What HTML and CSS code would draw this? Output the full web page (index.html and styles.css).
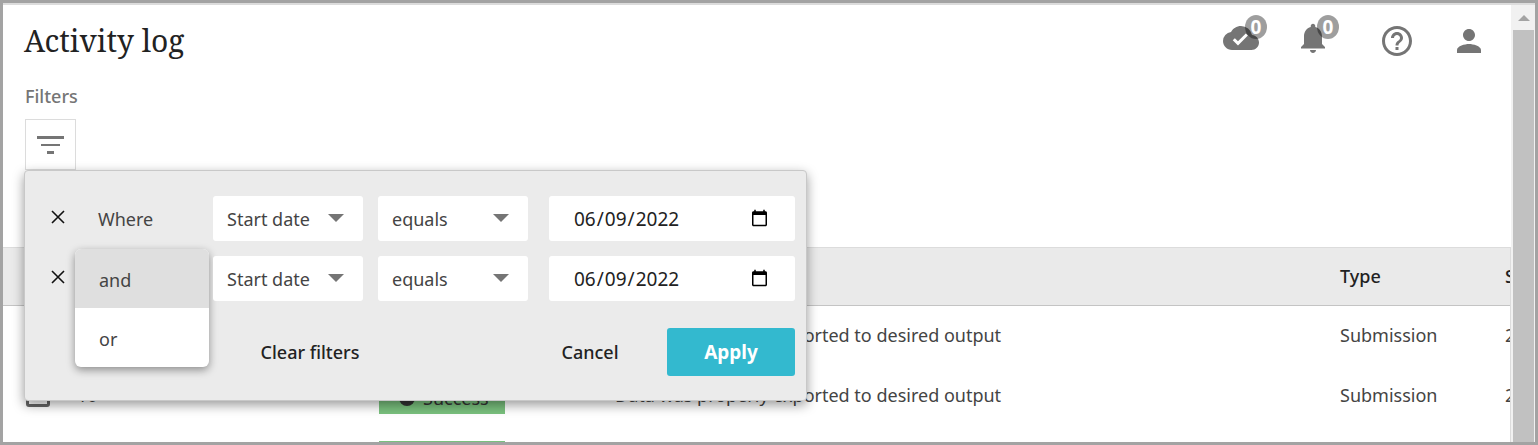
FILE: index.html
```html
<!DOCTYPE html>
<html lang="en-US">
<head>
    <meta charset="UTF-8">
    <meta name="viewport" content="width=device-width, initial-scale=1.0">
    <title>Activity log</title>
    <link rel="stylesheet" href="styles.css">
</head>
<body>

    <div class="frame">
        <main class="page">
            <header class="header">
                <h1>Activity log</h1>
                <nav class="tools">
                    <button type="button" class="tool has-badge" aria-label="Uploads">
                        <svg viewBox="0 0 24 24"><path d="M19.35 10.04A7.49 7.49 0 0 0 12 4C9.11 4 6.6 5.64 5.35 8.04A5.994 5.994 0 0 0 0 14c0 3.31 2.69 6 6 6h13c2.76 0 5-2.24 5-5 0-2.64-2.05-4.78-4.65-4.96zM10 17l-3.5-3.5 1.41-1.41L10 14.17l5.18-5.17 1.41 1.41L10 17z"/></svg>
                        <span class="badge">0</span>
                    </button>
                    <button type="button" class="tool has-badge" aria-label="Notifications">
                        <svg viewBox="0 0 24 24"><path d="M12 22c1.1 0 2-.9 2-2h-4c0 1.1.89 2 2 2zm6-6v-5c0-3.07-1.64-5.64-4.5-6.32V4c0-.83-.67-1.5-1.5-1.5s-1.5.67-1.5 1.5v.68C7.63 5.36 6 7.92 6 11v5l-2 2v1h16v-1l-2-2z"/></svg>
                        <span class="badge">0</span>
                    </button>
                    <button type="button" class="tool help" aria-label="Help">
                        <svg viewBox="0 0 24 24"><path d="M11 18h2v-2h-2v2zm1-16C6.48 2 2 6.48 2 12s4.48 10 10 10 10-4.48 10-10S17.52 2 12 2zm0 18c-4.41 0-8-3.59-8-8s3.59-8 8-8 8 3.59 8 8-3.59 8-8 8zm0-14c-2.21 0-4 1.79-4 4h2c0-1.1.9-2 2-2s2 .9 2 2c0 2-3 1.75-3 5h2c0-2.25 3-2.5 3-5 0-2.21-1.79-4-4-4z"/></svg>
                    </button>
                    <button type="button" class="tool" aria-label="Account">
                        <svg viewBox="0 0 24 24"><path d="M12 12c2.21 0 4-1.79 4-4s-1.79-4-4-4-4 1.79-4 4 1.79 4 4 4zm0 2c-2.67 0-8 1.34-8 4v2h16v-2c0-2.66-5.33-4-8-4z"/></svg>
                    </button>
                </nav>
            </header>

            <section class="filters">
                <h2>Filters</h2>
                <div class="filter-anchor">
                    <button type="button" class="filter-btn" aria-label="Edit filters">
                        <svg viewBox="0 0 27 18"><path d="M0 0h27v3H0zM4 8h19v2H4zM10 15h7v3h-7z"/></svg>
                    </button>

                    <form class="panel">
                        <div class="row">
                            <button type="button" class="remove" aria-label="Remove filter">
                                <svg viewBox="0 0 14 14"><path d="M1 1l12 12M13 1L1 13"/></svg>
                            </button>
                            <span class="where">Where</span>
                            <div class="select">
                                <select aria-label="Field"><option>Start date</option></select>
                            </div>
                            <div class="select">
                                <select aria-label="Operator"><option>equals</option></select>
                            </div>
                            <input type="date" class="date" aria-label="Date" value="2022-06-09">
                        </div>
                        <div class="row">
                            <button type="button" class="remove" aria-label="Remove filter">
                                <svg viewBox="0 0 14 14"><path d="M1 1l12 12M13 1L1 13"/></svg>
                            </button>
                            <div class="join">
                                <div class="menu" role="listbox" aria-label="Join">
                                    <button type="button" role="option" aria-selected="true">and</button>
                                    <button type="button" role="option" aria-selected="false">or</button>
                                </div>
                            </div>
                            <div class="select">
                                <select aria-label="Field"><option>Start date</option></select>
                            </div>
                            <div class="select">
                                <select aria-label="Operator"><option>equals</option></select>
                            </div>
                            <input type="date" class="date" aria-label="Date" value="2022-06-09">
                        </div>
                        <div class="actions">
                            <button type="button" class="btn">Clear filters</button>
                            <button type="button" class="btn cancel">Cancel</button>
                            <button type="submit" class="btn apply">Apply</button>
                        </div>
                    </form>
                </div>
            </section>

            <div class="table-wrap">
                <table>
                    <colgroup>
                        <col class="col-check">
                        <col class="col-id">
                        <col class="col-status">
                        <col>
                        <col class="col-type">
                        <col class="col-start">
                    </colgroup>
                    <thead>
                        <tr>
                            <th></th>
                            <th></th>
                            <th></th>
                            <th></th>
                            <th>Type</th>
                            <th>Start date</th>
                        </tr>
                    </thead>
                    <tbody>
                        <tr>
                            <td class="check"><input type="checkbox" aria-label="Select row"></td>
                            <td></td>
                            <td></td>
                            <td>Data was properly exported to desired output</td>
                            <td>Submission</td>
                            <td>2022-06-09</td>
                        </tr>
                        <tr>
                            <td class="check"><input type="checkbox" aria-label="Select row"></td>
                            <td>10</td>
                            <td><span class="status"><i>✓</i>Success</span></td>
                            <td>Data was properly exported to desired output</td>
                            <td>Submission</td>
                            <td>2022-06-09</td>
                        </tr>
                        <tr>
                            <td></td>
                            <td></td>
                            <td><span class="status"></span></td>
                            <td></td>
                            <td></td>
                            <td></td>
                        </tr>
                    </tbody>
                </table>
            </div>
        </main>
        <div class="scrollbar">
            <span class="up"></span>
            <span class="thumb"></span>
        </div>
    </div>

</body>
</html>
```
FILE: styles.css
```css
* {
    box-sizing: border-box;
}

body {
    margin: 0;
    font-family: "Noto Sans", "Open Sans", sans-serif;
    font-size: 18px;
    line-height: 24px;
    color: #444;
    background: #fff;
}

button, select, input {
    font: inherit;
    color: inherit;
}

button {
    padding: 0;
    border: none;
    background: none;
    cursor: pointer;
}

svg {
    display: block;
}

.frame {
    display: flex;
    height: 100vh;
    border: 3px solid #a3a3a3;
    overflow: hidden;
}

.page {
    flex: 1;
    min-width: 0;
    border-top: 2px solid #dcdcdc;
}

/* header */
.header {
    display: flex;
    align-items: center;
    justify-content: space-between;
    height: 72px;
    padding: 0 24px 0 21px;
}

h1 {
    margin: 0;
    font-family: "Noto Serif", "Liberation Serif", serif;
    font-size: 30px;
    line-height: 40px;
    font-weight: 400;
    color: #222;
}

.tools {
    display: flex;
    align-items: center;
    gap: 36px;
}

.tool {
    position: relative;
}

.tool svg {
    width: 36px;
    height: 36px;
    fill: #757575;
}

.has-badge {
    padding-bottom: 6px;
}

.help {
    margin-left: 12px;
}

.badge {
    position: absolute;
    top: -5px;
    right: -8px;
    width: 22px;
    height: 24px;
    border-radius: 50%;
    background: rgba(0, 0, 0, 0.38);
    color: #fff;
    font-size: 19px;
    font-weight: 700;
    text-align: center;
}

/* filters */
.filters {
    height: 170px;
    padding: 7px 22px 0;
}

h2 {
    margin: 0 0 11px;
    font-size: 18px;
    line-height: 24px;
    font-weight: 500;
    color: #757575;
}

.filter-anchor {
    position: relative;
}

.filter-btn {
    display: flex;
    align-items: center;
    justify-content: center;
    width: 51px;
    height: 51px;
    border: 1px solid #dcdcdc;
}

.filter-btn svg {
    width: 27px;
    height: 18px;
    fill: #757575;
}

.panel {
    position: absolute;
    top: 51px;
    left: -1px;
    z-index: 1;
    display: flex;
    flex-direction: column;
    gap: 15px;
    padding: 25px 11px 24px 26px;
    border: 1px solid #c8c8c8;
    border-radius: 4px;
    background: #ebebeb;
    box-shadow: 0 4px 12px rgba(0, 0, 0, 0.4);
}

.row {
    display: grid;
    grid-template-columns: 32px 100px 150px 150px 252px;
    column-gap: 15px;
    align-items: center;
    height: 45px;
}

.remove {
    padding-bottom: 4px;
}

.remove svg {
    width: 14px;
    height: 14px;
    fill: none;
    stroke: #111;
    stroke-width: 1.6;
}

.select {
    position: relative;
}

.select::after {
    content: "";
    position: absolute;
    top: 18px;
    right: 19px;
    border: 8px solid transparent;
    border-top-color: #757575;
    border-bottom: none;
    pointer-events: none;
}

.select select {
    display: block;
    width: 100%;
    height: 45px;
    padding: 0 14px;
    border: none;
    border-radius: 3px;
    background: #fff;
    appearance: none;
}

.date {
    height: 45px;
    margin-left: 6px;
    padding: 0 24px;
    border: none;
    border-radius: 3px;
    background: #fff;
    color: #222;
    font-size: 19px;
}

.join {
    position: relative;
    height: 45px;
}

.menu {
    position: absolute;
    top: -7px;
    left: -23px;
    width: 134px;
    border-radius: 6px;
    background: #fff;
    box-shadow: 0 3px 8px rgba(0, 0, 0, 0.4);
    overflow: hidden;
}

.menu button {
    display: block;
    width: 100%;
    height: 59px;
    padding: 2px 24px 0;
    text-align: left;
}

.menu button[aria-selected="true"] {
    background: #dfdfdf;
}

.actions {
    display: flex;
    justify-content: flex-end;
    gap: 13px;
    margin-top: 12px;
    padding-left: 195px;
}

.btn {
    width: 128px;
    height: 48px;
    border-radius: 3px;
    font-weight: 500;
    color: #222;
}

.btn.cancel {
    margin-left: auto;
}

.btn.apply {
    background: #33b9cf;
    color: #fff;
    font-size: 19px;
    font-weight: 700;
}

/* log table */
.table-wrap {
    border: 1px solid #dcdcdc;
    border-width: 1px 1px 0 0;
    overflow: hidden;
}

table {
    width: calc(100% + 150px);
    table-layout: fixed;
    border-collapse: collapse;
}

.col-check {
    width: 74px;
}

.col-id {
    width: 302px;
}

.col-status {
    width: 236px;
}

.col-type {
    width: 165px;
}

.col-start {
    width: 155px;
}

th, td {
    height: 60px;
    padding: 0;
    text-align: left;
    white-space: nowrap;
}

th {
    height: 57px;
    border-bottom: 1px solid #c4c4c4;
    background: #eaeaea;
    color: #222;
    font-weight: 500;
}

.check {
    padding-left: 23px;
}

.check input {
    display: block;
    width: 24px;
    height: 24px;
    margin: 0;
    border: 3px solid #666;
    border-radius: 3px;
    appearance: none;
}

.status {
    display: flex;
    align-items: center;
    gap: 8px;
    width: 126px;
    height: 33px;
    margin-top: 5px;
    padding-left: 20px;
    background: #7ac17e;
    color: #333;
}

.status i {
    width: 16px;
    height: 16px;
    border-radius: 50%;
    background: #333;
    color: #7ac17e;
    font-size: 12px;
    line-height: 16px;
    font-style: normal;
    text-align: center;
}

/* scrollbar */
.scrollbar {
    width: 24px;
    padding: 0 1px 0 2px;
    border-top: 2px solid #dcdcdc;
    background: #f1f1f1;
    display: flex;
    flex-direction: column;
}

.up {
    align-self: center;
    margin: 10px 0 9px;
    border: 6px solid transparent;
    border-top: none;
    border-bottom-color: #a3a3a3;
}

.thumb {
    flex: 1;
    background: #c1c1c1;
}
```
